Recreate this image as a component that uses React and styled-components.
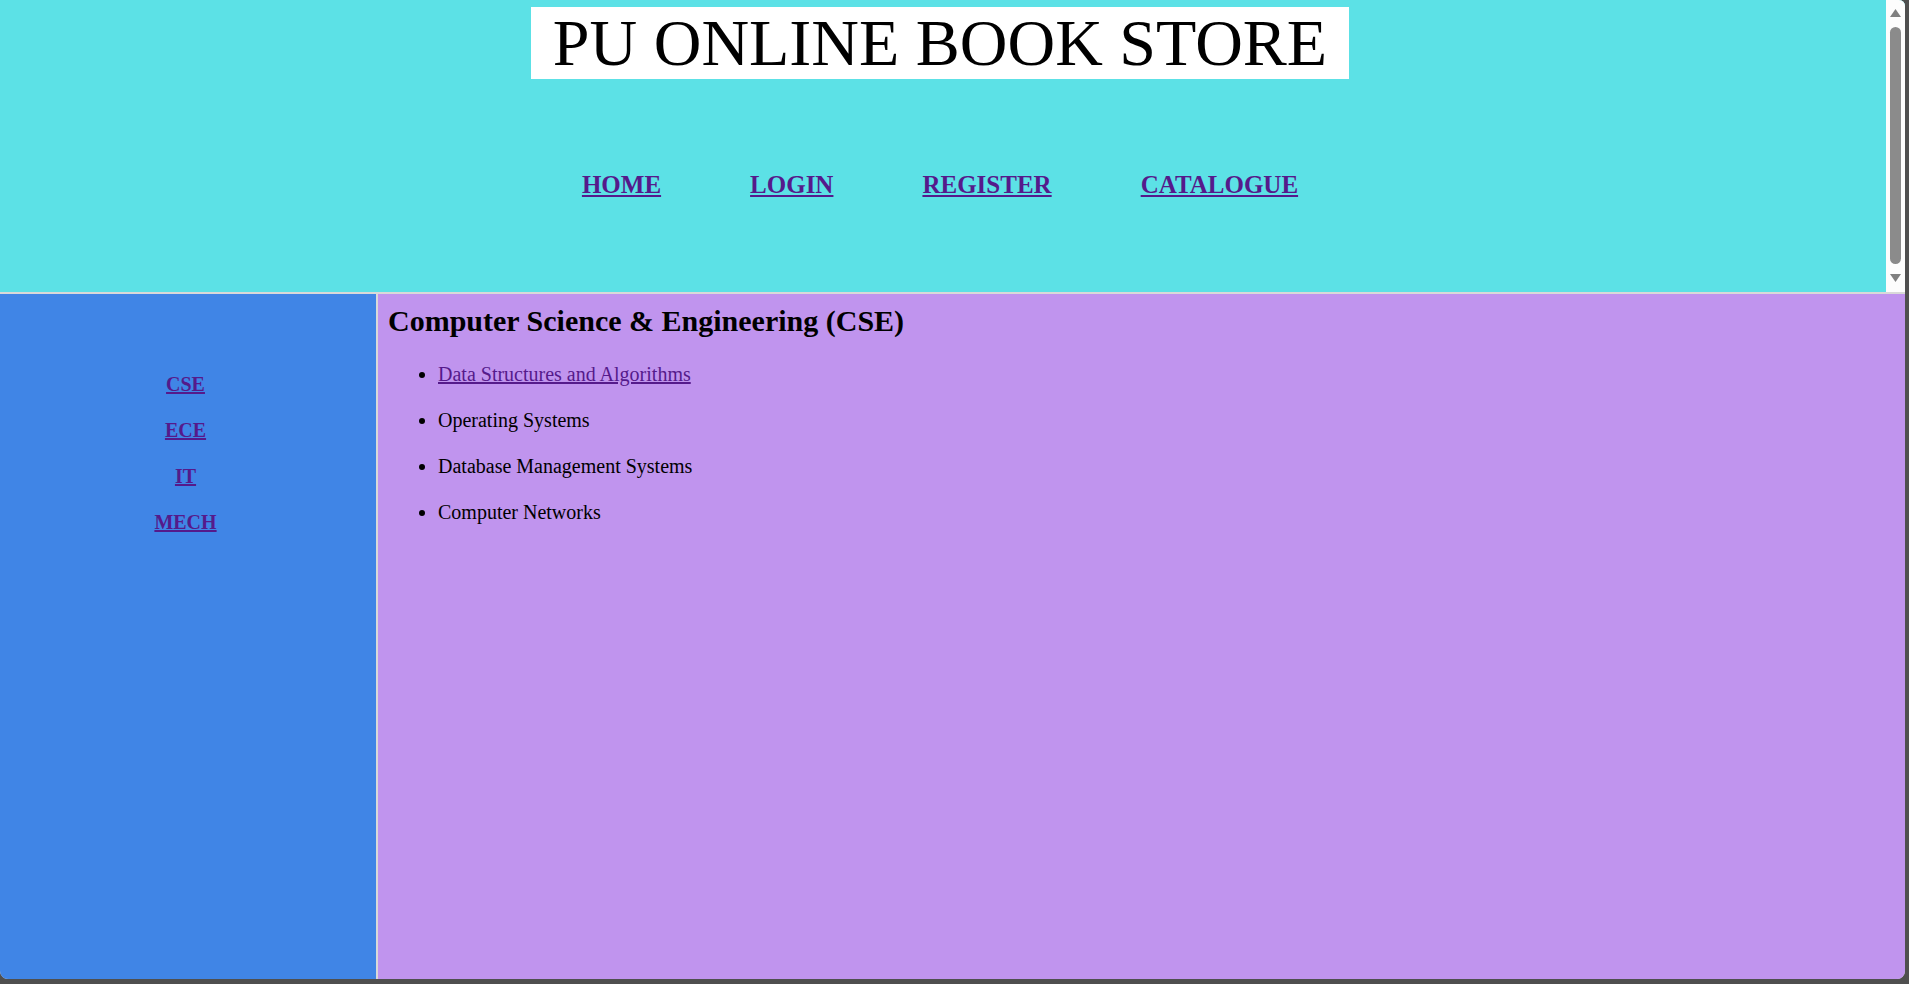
import React from 'react';
import styled, { createGlobalStyle } from 'styled-components';

const GlobalStyle = createGlobalStyle`
  html, body {
    margin: 0;
    padding: 0;
    background: #4f4f4f;
    overflow: hidden;
  }
`;

const Window = styled.div`
  width: 1905px;
  height: 979px;
  display: flex;
  flex-direction: column;
  background: #d9d9d9;
  border-radius: 0 6px 8px 8px;
  overflow: hidden;
  font-family: "Liberation Serif", "Times New Roman", serif;
`;

const TopFrame = styled.div`
  height: 292px;
  display: flex;
  background: #5ce1e6;
  margin-bottom: 2px;
`;

const TopContent = styled.div`
  flex: 1;
  text-align: center;
  padding: 7px 6px 0 0;
`;

const TitleBox = styled.h1`
  display: inline-block;
  margin: 0;
  padding: 0 22px;
  background: #ffffff;
  color: #000000;
  font-size: 66px;
  font-weight: normal;
  line-height: 72px;
`;

const Nav = styled.nav`
  display: flex;
  justify-content: center;
  gap: 89px;
  margin-top: 91px;
`;

const NavLink = styled.a`
  color: #551a8b;
  font-size: 25px;
  font-weight: bold;
  line-height: 29px;
  text-decoration: underline;
`;

const Scrollbar = styled.div`
  width: 19px;
  background: #fdfdfd;
  display: flex;
  flex-direction: column;
  align-items: center;
  padding: 9px 0 10px;
  box-sizing: border-box;
  gap: 10px;
`;

const Thumb = styled.div`
  flex: 1;
  width: 11px;
  border-radius: 6px;
  background: #8b8b8b;
`;

const Arrow = ({ down }) => (
  <svg width="11" height="8" viewBox="0 0 11 8">
    <path d={down ? 'M0 0 L11 0 L5.5 8 Z' : 'M5.5 0 L11 8 L0 8 Z'} fill="#808080" />
  </svg>
);

const Bottom = styled.div`
  flex: 1;
  display: flex;
  gap: 2px;
`;

const SideFrame = styled.div`
  width: 376px;
  background: #4085e6;
  display: flex;
  flex-direction: column;
  align-items: center;
  gap: 23px;
  padding: 79px 5px 0 0;
  box-sizing: border-box;
`;

const SideLink = styled.a`
  color: #551a8b;
  font-size: 20px;
  font-weight: bold;
  line-height: 23px;
  text-decoration: underline;
`;

const MainFrame = styled.div`
  flex: 1;
  background: #c094ee;
  padding: 10px 10px 0;
  color: #000000;
`;

const Heading = styled.h2`
  margin: 0;
  font-size: 30px;
  font-weight: bold;
  line-height: 34px;
`;

const BookList = styled.ul`
  margin: 25px 0 0;
  padding-left: 50px;
  display: flex;
  flex-direction: column;
  gap: 23px;
`;

const BookItem = styled.li`
  font-size: 20px;
  line-height: 23px;
`;

const BookLink = styled.a`
  color: #551a8b;
  text-decoration: underline;
`;

const navItems = ['HOME', 'LOGIN', 'REGISTER', 'CATALOGUE'];
const branches = ['CSE', 'ECE', 'IT', 'MECH'];

export default function App() {
  return (
    <>
      <GlobalStyle />
      <Window>
        <TopFrame>
          <TopContent>
            <TitleBox>PU ONLINE BOOK STORE</TitleBox>
            <Nav>
              {navItems.map((item) => (
                <NavLink key={item} href="#">{item}</NavLink>
              ))}
            </Nav>
          </TopContent>
          <Scrollbar>
            <Arrow />
            <Thumb />
            <Arrow down />
          </Scrollbar>
        </TopFrame>
        <Bottom>
          <SideFrame>
            {branches.map((b) => (
              <SideLink key={b} href="#">{b}</SideLink>
            ))}
          </SideFrame>
          <MainFrame>
            <Heading>Computer Science &amp; Engineering (CSE)</Heading>
            <BookList>
              <BookItem><BookLink href="#">Data Structures and Algorithms</BookLink></BookItem>
              <BookItem>Operating Systems</BookItem>
              <BookItem>Database Management Systems</BookItem>
              <BookItem>Computer Networks</BookItem>
            </BookList>
          </MainFrame>
        </Bottom>
      </Window>
    </>
  );
}
